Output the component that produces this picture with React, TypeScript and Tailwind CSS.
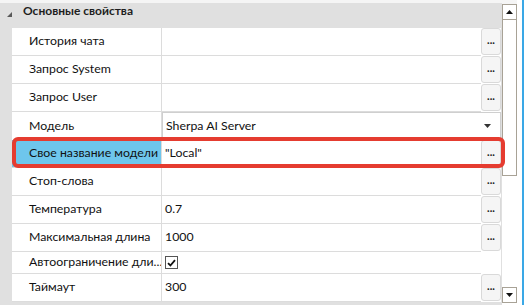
import React from "react";

type Row = {
  label: string;
  value?: string;
  kind?: "button" | "select" | "check" | "none";
  selected?: boolean;
  short?: boolean;
};

const rows: Row[] = [
  { label: "История чата", kind: "button" },
  { label: "Запрос System", kind: "button" },
  { label: "Запрос User", kind: "button" },
  { label: "Модель", value: "Sherpa AI Server", kind: "select" },
  { label: "Свое название модели", value: "\"Local\"", kind: "button", selected: true },
  { label: "Стоп-слова", kind: "button" },
  { label: "Температура", value: "0.7", kind: "button" },
  { label: "Максимальная длина", value: "1000", kind: "button" },
  { label: "Автоограничение дли...", kind: "check", short: true },
  { label: "Таймаут", value: "300", kind: "button" },
];

function DotsButton() {
  return (
    <div className="w-[20px] h-[27px] flex items-center justify-center rounded-[3px] border border-[#d9d9d9] bg-[#f5f5f5] text-[11px] font-bold leading-none text-[#1a1a1a] pb-[4px]">
      ...
    </div>
  );
}

function Check() {
  return (
    <div className="w-[13px] h-[13px] border border-[#555] bg-white flex items-center justify-center">
      <svg width="9" height="8" viewBox="0 0 9 8">
        <path d="M1 4.2 L3.4 6.5 L8 1.2" stroke="#111" strokeWidth="1.8" fill="none" />
      </svg>
    </div>
  );
}

function PropRow({ row }: { row: Row }) {
  const h = row.short ? "h-[22px]" : "h-[28px]";
  if (row.kind === "select") {
    return (
      <div className={`flex ${h}`}>
        <div className="w-[150px] border-r border-[#dcdcdc] flex items-center pl-[17px] text-[12.3px] text-[#111]">
          {row.label}
        </div>
        <div className="flex-1 border border-[#cfcfcf] flex items-center justify-between pl-[3px] pr-[9px] text-[12.3px] text-[#111]">
          <span>{row.value}</span>
          <svg width="7" height="4" viewBox="0 0 7 4">
            <polygon points="0,0 7,0 3.5,4" fill="#333" />
          </svg>
        </div>
      </div>
    );
  }
  return (
    <div className={`flex ${h}`}>
      <div className="flex flex-1 border-b border-[#dcdcdc]">
        <div
          className={`w-[150px] border-r border-[#dcdcdc] flex items-center pl-[17px] text-[12.3px] text-[#111] whitespace-nowrap overflow-hidden ${
            row.selected ? "bg-[#6ec6ec]" : ""
          }`}
        >
          {row.label}
        </div>
        <div className="flex-1 flex items-center pl-[3px] text-[12.3px] text-[#111]">
          {row.kind === "check" ? <Check /> : row.value}
        </div>
      </div>
      <div className="w-[20px] flex items-start">
        {row.kind === "button" ? <DotsButton /> : null}
      </div>
    </div>
  );
}

export default function App() {
  return (
    <div className="w-[527px] h-[305px] bg-white flex relative overflow-hidden font-['Lato',sans-serif]">
      <div className="w-[502px] flex flex-col bg-[#e0e0e0]">
        <div className="h-[3px] bg-[#f5f5f5]" />
        <div className="h-[25px] flex items-start pl-[7px]">
          <svg width="5" height="5" viewBox="0 0 5 5" className="mt-[9px]">
            <polygon points="5,0 5,5 0,5" fill="#595959" />
          </svg>
          <span className="ml-[11px] text-[12px] leading-[16px] font-bold text-[#1e1e1e]">
            Основные свойства
          </span>
        </div>
        <div className="ml-[12px] w-[489px] bg-white flex flex-col">
          {rows.map((r) => (
            <PropRow key={r.label} row={r} />
          ))}
        </div>
      </div>
      <div className="w-[15px] flex flex-col bg-white">
        <div className="h-[4px] bg-[#f5f5f5]" />
        <div className="h-[16px] border border-[#a8a296] flex items-center justify-center">
          <svg width="7" height="4" viewBox="0 0 7 4">
            <polygon points="0,4 7,4 3.5,0" fill="#111" />
          </svg>
        </div>
        <div className="h-[156px] border border-t-0 border-[#a8a296]" />
        <div className="flex-1" />
        <div className="h-[16px] mb-[2px] border border-[#a8a296] flex items-center justify-center">
          <svg width="7" height="4" viewBox="0 0 7 4">
            <polygon points="0,0 7,0 3.5,4" fill="#111" />
          </svg>
        </div>
      </div>
      <div className="w-[5px]" />
      <div className="w-[2px] bg-[#3aa8e6]" />
      <div className="flex-1" />
      <div className="absolute left-[12px] top-[137px] w-[493px] h-[31px] border-[4px] border-[#e53c30] rounded-[6px]" />
    </div>
  );
}
